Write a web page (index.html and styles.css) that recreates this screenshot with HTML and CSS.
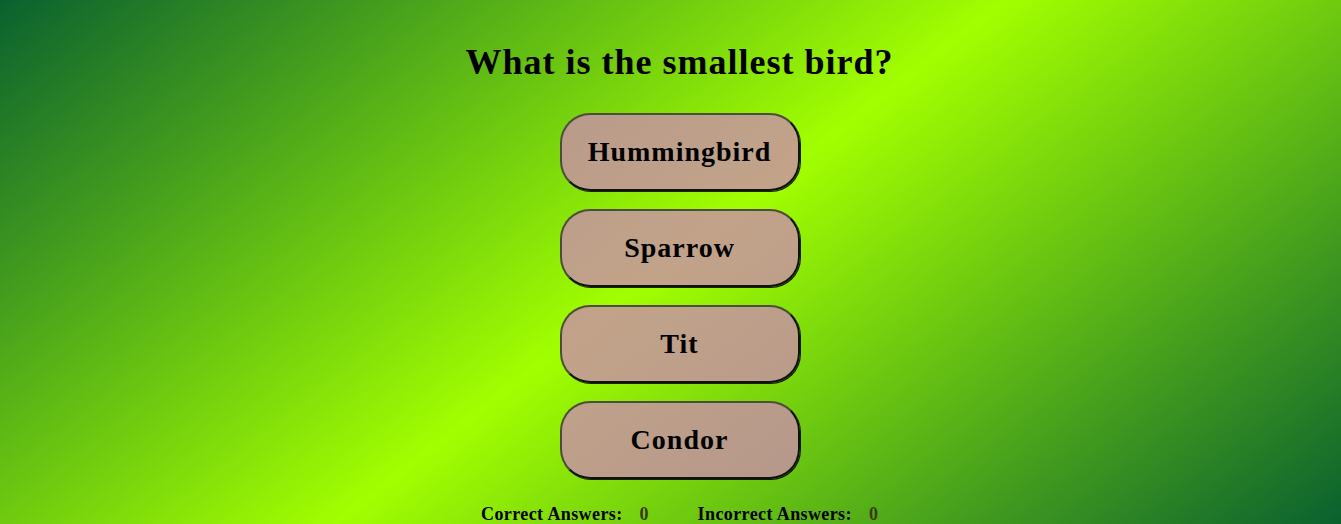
FILE: index.html
```html
<!DOCTYPE html>
<html lang="en">
<head>
<meta charset="utf-8">
<title>Bird Quiz</title>
<link rel="stylesheet" href="styles.css">
</head>
<body>
<main class="quiz">
  <h1 class="question">What is the smallest bird?</h1>
  <div class="answers">
    <button class="answer" type="button">Hummingbird</button>
    <button class="answer" type="button">Sparrow</button>
    <button class="answer" type="button">Tit</button>
    <button class="answer" type="button">Condor</button>
  </div>
  <div class="score">
    <div class="score-item"><span class="score-label">Correct Answers:</span><span class="score-value">0</span></div>
    <div class="score-item"><span class="score-label">Incorrect Answers:</span><span class="score-value">0</span></div>
  </div>
</main>
</body>
</html>
```

FILE: styles.css
```css
html {
  background: #0a612f;
}

body {
  margin: 0;
  height: 100vh;
  overflow: hidden;
  background: linear-gradient(142deg, #0a612f 0%, #a2ff00 50%, #0a612f 100%);
  font-family: "Liberation Serif", "Times New Roman", serif;
  color: #000;
}

.quiz {
  display: flex;
  flex-direction: column;
  align-items: center;
  padding: 40px 0 0 18px;
}

.question {
  margin: 0;
  font-size: 36px;
  line-height: 44px;
  font-weight: 700;
  letter-spacing: 1px;
}

.answers {
  display: flex;
  flex-direction: column;
  gap: 18px;
  margin-top: 29px;
}

.answer {
  box-sizing: border-box;
  width: 240px;
  height: 78px;
  border: 2px solid #4d4d3a;
  border-right-color: #111;
  border-bottom-color: #111;
  border-radius: 30px;
  box-shadow: 1px 1px 0 rgba(0, 0, 0, 0.85);
  background: linear-gradient(142deg, #a4878f 0%, #c2a389 50%, #a4878f 100%);
  background-attachment: fixed;
  font-family: "Liberation Serif", "Times New Roman", serif;
  font-size: 28px;
  font-weight: 700;
  letter-spacing: 1px;
  color: #000;
  padding: 0;
  cursor: pointer;
}

.score {
  display: flex;
  gap: 49px;
  margin-top: 24px;
  font-size: 18px;
  line-height: 22px;
  font-weight: 700;
}

.score-item {
  display: flex;
  gap: 17px;
}

.score-label {
  letter-spacing: 0.4px;
}

.score-value {
  color: #3a3a0c;
}
```
